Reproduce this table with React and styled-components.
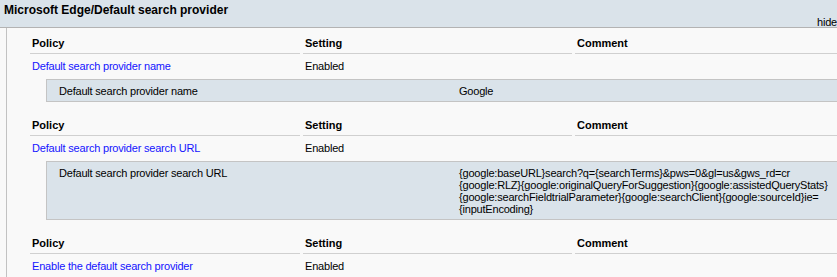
import React from 'react';
import styled, { createGlobalStyle } from 'styled-components';

const GlobalStyle = createGlobalStyle`
  html, body {
    margin: 0;
    padding: 0;
    background: #f9f9f9;
    overflow: hidden;
  }
  body {
    font-family: "Liberation Sans", Arial, sans-serif;
    font-size: 11px;
    color: #000;
  }
`;

const Page = styled.div`
  width: 837px;
  height: 277px;
  overflow: hidden;
  background: #f9f9f9;
`;

const Header = styled.div`
  height: 27px;
  background: #dae3ea;
  border-bottom: 1px solid #b3b3b3;
  display: flex;
  justify-content: space-between;
  align-items: flex-start;
`;

const Title = styled.span`
  font-size: 12px;
  font-weight: bold;
  line-height: 14px;
  padding: 3px 0 0 4px;
`;

const Hide = styled.span`
  align-self: flex-end;
  line-height: 13px;
  letter-spacing: -0.2px;
  margin-bottom: -2px;
`;

const Body = styled.div`
  margin-left: 6px;
  border-left: 1px solid #c2c2c2;
  padding: 8px 0 0 23px;
  width: 900px;
  min-height: 260px;
`;

const Section = styled.div`
  & + & {
    margin-top: 16px;
  }
`;

const Row = styled.div`
  display: grid;
  grid-template-columns: 270px 269px 1fr;
  column-gap: 3px;
`;

const HeadCell = styled.div`
  font-weight: bold;
  line-height: 13px;
  padding: 1px 2px 3px;
  border-bottom: 1px solid #d0d0d0;
`;

const Cell = styled.div`
  line-height: 13px;
  padding: 6px 2px 6px;
  letter-spacing: -0.2px;
  color: ${(p) => (p.$link ? '#1414ff' : '#000')};
`;

const Detail = styled.div`
  margin-left: 16px;
  background: #dae3ea;
  border: 1px solid #c4c4c4;
  display: grid;
  grid-template-columns: 400px 1fr;
  padding: 5px 0 4px 12px;
  line-height: 12px;
  letter-spacing: -0.2px;
`;

const Value = styled.div`
  line-height: 12px;
`;

const policies = [
  {
    name: 'Default search provider name',
    setting: 'Enabled',
    detail: 'Default search provider name',
    value: ['Google'],
  },
  {
    name: 'Default search provider search URL',
    setting: 'Enabled',
    detail: 'Default search provider search URL',
    value: [
      '{google:baseURL}search?q={searchTerms}&pws=0&gl=us&gws_rd=cr',
      '{google:RLZ}{google:originalQueryForSuggestion}{google:assistedQueryStats}',
      '{google:searchFieldtrialParameter}{google:searchClient}{google:sourceId}ie=',
      '{inputEncoding}',
    ],
  },
  {
    name: 'Enable the default search provider',
    setting: 'Enabled',
  },
];

function Policy({ item }) {
  return (
    <Section>
      <Row>
        <HeadCell>Policy</HeadCell>
        <HeadCell>Setting</HeadCell>
        <HeadCell>Comment</HeadCell>
      </Row>
      <Row>
        <Cell $link>{item.name}</Cell>
        <Cell>{item.setting}</Cell>
        <Cell />
      </Row>
      {item.detail && (
        <Detail>
          <div>{item.detail}</div>
          <Value>
            {item.value.map((line, i) => (
              <div key={i}>{line}</div>
            ))}
          </Value>
        </Detail>
      )}
    </Section>
  );
}

export default function App() {
  return (
    <Page>
      <GlobalStyle />
      <Header>
        <Title>Microsoft Edge/Default search provider</Title>
        <Hide>hide</Hide>
      </Header>
      <Body>
        {policies.map((p) => (
          <Policy key={p.name} item={p} />
        ))}
      </Body>
    </Page>
  );
}
